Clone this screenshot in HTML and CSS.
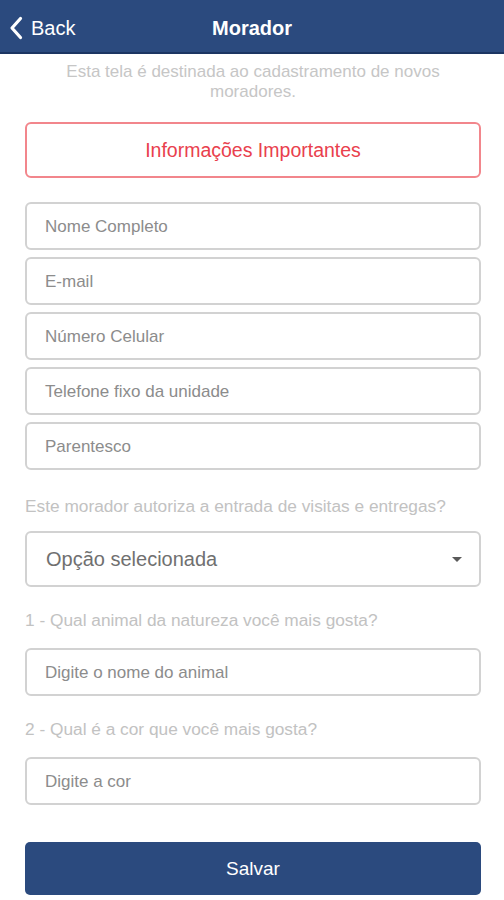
FILE: index.html
```html
<!DOCTYPE html>
<html lang="pt">
<head>
<meta charset="utf-8">
<title>Morador</title>
<link rel="stylesheet" href="styles.css">
</head>
<body>
<header class="navbar">
  <a class="back" href="#">
    <svg class="chev" width="14" height="24" viewBox="0 0 14 24"><path d="M11.5 2.5 L3 12 L11.5 21.5" fill="none" stroke="#fff" stroke-width="3.2" stroke-linecap="round" stroke-linejoin="round"/></svg>
    <span>Back</span>
  </a>
  <h1 class="title">Morador</h1>
</header>
<main class="content">
  <p class="intro">Esta tela é destinada ao cadastramento de novos moradores.</p>
  <button class="info">Informações Importantes</button>
  <div class="fields">
    <div class="field">Nome Completo</div>
    <div class="field">E-mail</div>
    <div class="field">Número Celular</div>
    <div class="field">Telefone fixo da unidade</div>
    <div class="field">Parentesco</div>
  </div>
  <p class="label l1">Este morador autoriza a entrada de visitas e entregas?</p>
  <div class="select"><span>Opção selecionada</span><span class="caret"></span></div>
  <p class="label l2">1 - Qual animal da natureza você mais gosta?</p>
  <div class="field">Digite o nome do animal</div>
  <p class="label l2">2 - Qual é a cor que você mais gosta?</p>
  <div class="field">Digite a cor</div>
  <button class="save">Salvar</button>
</main>
</body>
</html>
```
FILE: styles.css
```css
* { box-sizing: border-box; }
html, body { margin: 0; padding: 0; background: #fff; }
body { font-family: "Liberation Sans", Arial, sans-serif; width: 504px; }
.navbar {
  height: 54px;
  background: #2b4a7e;
  border-bottom: 2px solid #1c3562;
  position: relative;
  display: flex;
  align-items: center;
  justify-content: center;
}
.back {
  position: absolute;
  left: 9px;
  top: 16px;
  display: flex;
  align-items: center;
  gap: 8px;
  color: #fff;
  text-decoration: none;
  font-size: 20px;
}
.chev { display: block; }
.title {
  margin: 0;
  color: #fff;
  font-size: 20px;
  font-weight: bold;
  padding-top: 5px;
}
.content { padding: 8px 23px 0 25px; display: flex; flex-direction: column; }
.intro {
  margin: 0 10px;
  text-align: center;
  color: #c6c6c6;
  font-size: 17px;
  line-height: 20px;
}
.info {
  margin-top: 20px;
  height: 56px;
  border: 2px solid #f2868c;
  border-radius: 6px;
  background: #fff;
  color: #e9404d;
  font-family: inherit;
  font-size: 19.5px;
  padding: 0;
}
.fields { margin-top: 24px; display: flex; flex-direction: column; gap: 7px; }
.field {
  height: 48px;
  border: 2px solid #d2d2d2;
  border-radius: 6px;
  padding-left: 18px;
  display: flex;
  align-items: center;
  color: #8c8c8c;
  font-size: 17px;
  padding-top: 1px;
}
.label {
  margin: 0;
  color: #c2c2c2;
  font-size: 17.3px;
  line-height: 20px;
}
.l1 { margin-top: 26px; margin-bottom: 15px; }
.l2 { margin-top: 23px; margin-bottom: 18px; }
.select {
  height: 56px;
  border: 2px solid #d2d2d2;
  border-radius: 6px;
  padding: 0 17px 0 19px;
  display: flex;
  align-items: center;
  justify-content: space-between;
  color: #707070;
  font-size: 20px;
}
.caret {
  width: 0; height: 0;
  border-left: 5px solid transparent;
  border-right: 5px solid transparent;
  border-top: 5px solid #5a5a5a;
}
.save {
  margin-top: 37px;
  height: 53px;
  border: none;
  border-radius: 5px;
  background: #2b4a7e;
  color: #fff;
  font-family: inherit;
  font-size: 19px;
  padding: 0;
}
```
